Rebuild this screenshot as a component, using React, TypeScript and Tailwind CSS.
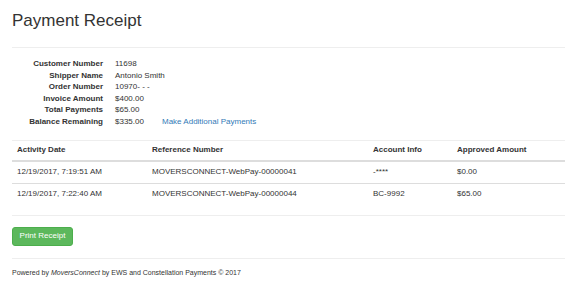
import React from "react";

const details: { label: string; value: string; link?: string }[] = [
    { label: "Customer Number", value: "11698" },
    { label: "Shipper Name", value: "Antonio Smith" },
    { label: "Order Number", value: "10970- - -" },
    { label: "Invoice Amount", value: "$400.00" },
    { label: "Total Payments", value: "$65.00" },
    { label: "Balance Remaining", value: "$335.00", link: "Make Additional Payments" },
];

const payments = [
    { date: "12/19/2017, 7:19:51 AM", ref: "MOVERSCONNECT-WebPay-00000041", account: "-****", amount: "$0.00" },
    { date: "12/19/2017, 7:22:40 AM", ref: "MOVERSCONNECT-WebPay-00000044", account: "BC-9992", amount: "$65.00" },
];

const cols = "grid grid-cols-[135px_221px_84px_1fr]";

const App: React.FC = () => {
    return (
        <div className="min-h-[285px] bg-white pl-[12px] text-[#333] font-['Liberation_Sans',Arial,sans-serif]">
            <h1 className="pt-[11px] text-[17px] leading-[20px] font-normal">Payment Receipt</h1>
            <hr className="mt-[16px] border-t border-[#eee]" />

            <div className="mt-[10px] text-[8px] leading-[11.6px]">
                {details.map((d) => (
                    <div key={d.label} className="flex whitespace-nowrap">
                        <div className="w-[91px] shrink-0 text-right font-bold">{d.label}</div>
                        <div className="ml-[12px] w-[47px] shrink-0">{d.value}</div>
                        {d.link && <a className="text-[#337ab7]">{d.link}</a>}
                    </div>
                ))}
            </div>

            <hr className="mt-[12px] border-t border-[#eee]" />

            <div className="text-[8px]">
                <div className={`${cols} h-[21px] items-center border-b-2 border-[#ddd] font-bold`}>
                    <div className="px-[5px]">Activity Date</div>
                    <div className="px-[5px]">Reference Number</div>
                    <div className="px-[5px]">Account Info</div>
                    <div className="px-[5px]">Approved Amount</div>
                </div>
                {payments.map((p, i) => (
                    <div
                        key={p.ref}
                        className={`${cols} h-[21px] items-center ${i > 0 ? "border-t border-[#ddd]" : ""}`}
                    >
                        <div className="px-[5px]">{p.date}</div>
                        <div className="px-[5px]">{p.ref}</div>
                        <div className="px-[5px]">{p.account}</div>
                        <div className="px-[5px]">{p.amount}</div>
                    </div>
                ))}
            </div>

            <hr className="mt-[11px] border-t border-[#eee]" />

            <button className="mt-[11px] h-[19px] w-[61px] rounded-[3px] border border-[#4cae4c] bg-[#5cb85c] text-[8px] text-white">
                Print Receipt
            </button>

            <hr className="mt-[12px] border-t border-[#eee]" />

            <p className="mt-[9px] text-[7px] leading-[10px]">
                Powered by <i>MoversConnect</i> by EWS and Constellation Payments © 2017
            </p>
        </div>
    );
};

export default App;
